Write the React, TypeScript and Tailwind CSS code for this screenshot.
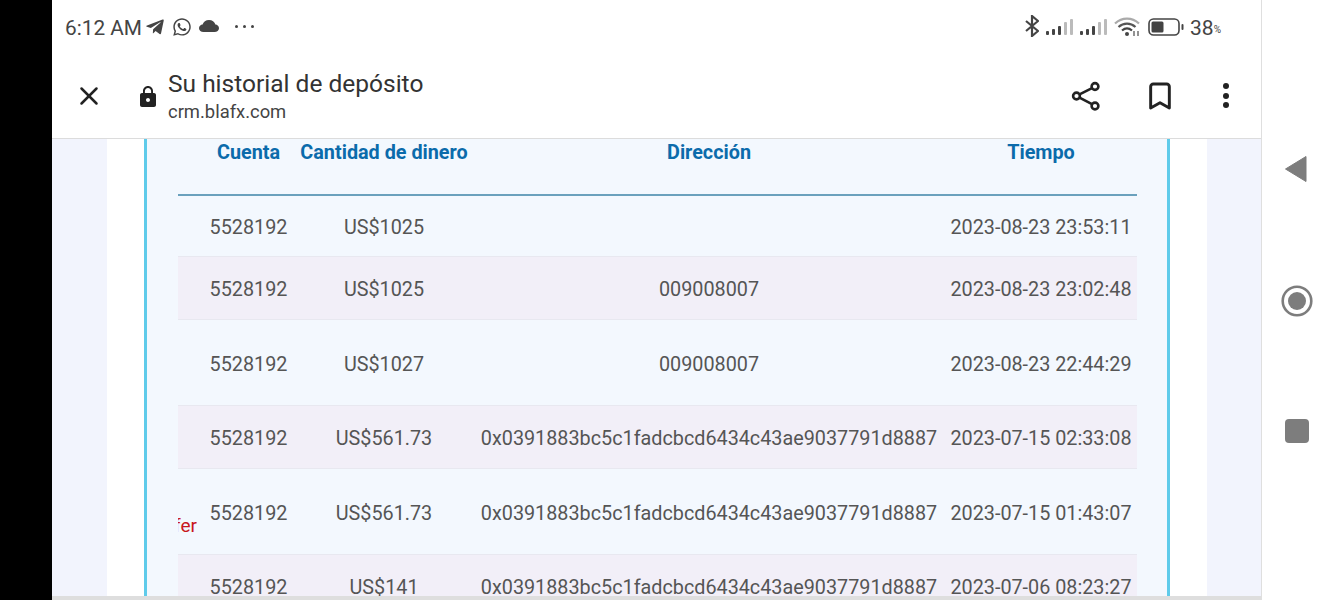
import React from 'react';
import { Bookmark, X } from 'lucide-react';
import { FaTelegramPlane, FaWhatsapp } from 'react-icons/fa';
import { MdLock } from 'react-icons/md';

const addr = '0x0391883bc5c1fadcbcd6434c43ae9037791d8887';

const rows = [
  { amount: 'US$1025', dir: '', time: '2023-08-23 23:53:11', h: 'h-[61px]', shaded: false, note: '' },
  { amount: 'US$1025', dir: '009008007', time: '2023-08-23 23:02:48', h: 'h-[63px]', shaded: true, note: '' },
  { amount: 'US$1027', dir: '009008007', time: '2023-08-23 22:44:29', h: 'h-[86px]', shaded: false, note: '' },
  { amount: 'US$561.73', dir: addr, time: '2023-07-15 02:33:08', h: 'h-[63px]', shaded: true, note: '' },
  { amount: 'US$561.73', dir: addr, time: '2023-07-15 01:43:07', h: 'h-[86px]', shaded: false, note: 'Transfer' },
  { amount: 'US$141', dir: addr, time: '2023-07-06 08:23:27', h: 'h-[63px]', shaded: true, note: '' },
];

const Signal = () => (
  <svg width="28" height="18" viewBox="0 0 28 18" className="shrink-0">
    <rect x="0" y="13" width="3" height="4" rx="1" fill="#444" />
    <rect x="6" y="11" width="3" height="6" rx="1" fill="#444" />
    <rect x="12" y="8" width="3" height="9" rx="1" fill="#444" />
    <rect x="18" y="4" width="3" height="13" rx="1" fill="#bbb" />
    <rect x="24" y="1" width="3" height="16" rx="1" fill="#bbb" />
  </svg>
);

const App: React.FC = () => {
  return (
    <div className="flex h-[600px] w-[1333px] overflow-hidden bg-white font-['Roboto',sans-serif]">
      <div className="w-[52px] shrink-0 bg-black" />

      <div className="flex w-[1209px] shrink-0 flex-col">
        {/* status bar */}
        <div className="flex h-[54px] shrink-0 items-center justify-between pl-[13px] pr-[40px] text-[#444]">
          <div className="flex items-center">
            <span className="text-[20.8px] leading-[28px] mt-[1px]">6:12 AM</span>
            <FaTelegramPlane className="ml-[3px] h-[20px] w-[20px]" />
            <FaWhatsapp className="ml-[7px] h-[20px] w-[20px]" />
            <svg width="20" height="12" viewBox="0 0 20 12" className="ml-[7px] mb-[3px]">
              <path d="M4.5 12C2 12 0 10.4 0 8.2 0 6.2 1.6 4.8 3.6 4.6 4.4 2 6.8 0 10 0c3.2 0 5.6 2 6.4 4.6 2 .2 3.6 1.6 3.6 3.6 0 2.2-2 3.8-4.5 3.8Z" fill="#444" />
            </svg>
            <span className="ml-[16px] mb-[2px] flex gap-[5px]">
              <i className="h-[3px] w-[3px] rounded-full bg-[#444]" />
              <i className="h-[3px] w-[3px] rounded-full bg-[#444]" />
              <i className="h-[3px] w-[3px] rounded-full bg-[#444]" />
            </span>
          </div>
          <div className="flex items-center">
            <svg width="14" height="22" viewBox="0 0 14 22" fill="none" stroke="#444" strokeWidth="2.2" className="mb-[2px]">
              <path d="M1 6L13 16 7 21V1L13 6 1 16" />
            </svg>
            <span className="ml-[7px]"><Signal /></span>
            <span className="ml-[6px]"><Signal /></span>
            <svg width="26" height="20" viewBox="0 0 26 20" fill="none" className="ml-[6px]">
              <path d="M1 6.5C8 0 18 0 25 6.5" stroke="#aaa" strokeWidth="2.2" />
              <path d="M4.5 10C9.5 5.5 16.5 5.5 21.5 10" stroke="#555" strokeWidth="2.2" />
              <path d="M8 13.5C11 11 15 11 18 13.5" stroke="#444" strokeWidth="2.2" />
              <circle cx="13" cy="17" r="2" fill="#444" />
              <path d="M20 14V19M24 14V19" stroke="#666" strokeWidth="1.4" />
            </svg>
            <svg width="36" height="18" viewBox="0 0 36 18" fill="none" className="ml-[8px]">
              <rect x="1" y="1" width="30" height="16" rx="4.5" stroke="#444" strokeWidth="1.6" />
              <rect x="3.5" y="3.5" width="12" height="11" rx="1.5" fill="#444" />
              <rect x="33.5" y="6" width="2" height="6" rx="1" fill="#444" />
            </svg>
            <span className="ml-[6px] text-[21px] leading-[28px] mt-[1px]">38</span>
            <span className="mt-[5px] text-[10px]">%</span>
          </div>
        </div>

        {/* browser header */}
        <div className="flex h-[85px] shrink-0 items-center border-b border-[#dcdcdc] pl-[22px] pr-[28px]">
          <X className="h-[30px] w-[30px] text-[#222]" strokeWidth={2} />
          <MdLock className="ml-[32px] mt-[1px] h-[24px] w-[24px] text-[#222]" />
          <div className="ml-[8px] flex-1">
            <div className="text-[24.5px] leading-[30px] text-[#333]">Su historial de depósito</div>
            <div className="text-[18.4px] leading-[25px] text-[#444]">crm.blafx.com</div>
          </div>
          <svg width="32" height="32" viewBox="0 0 32 32" fill="none" stroke="#222" strokeWidth="2.6" className="-mt-[1px]">
            <circle cx="25" cy="6.5" r="3.4" />
            <circle cx="6.5" cy="16" r="3.4" />
            <circle cx="25" cy="26" r="3.4" />
            <path d="M9.5 14.4L22 8.2M9.5 17.6L22 24.2" />
          </svg>
          <Bookmark className="-mt-[1px] ml-[42px] h-[32px] w-[32px] text-[#222]" strokeWidth={2.2} />
          <span className="-mt-[1px] ml-[47px] mr-[2px] flex w-[8px] flex-col gap-[3.5px]">
            <i className="h-[6px] w-[6px] rounded-full bg-[#222]" />
            <i className="h-[6px] w-[6px] rounded-full bg-[#222]" />
            <i className="h-[6px] w-[6px] rounded-full bg-[#222]" />
          </span>
        </div>

        {/* page */}
        <div className="flex min-h-0 flex-1 overflow-hidden border-b-[4px] border-[#dedede] bg-[#f2f4fd]">
          <div className="ml-[55px] flex w-[1100px] bg-white px-[37px]">
            <div className="flex w-full overflow-hidden border-x-[3px] border-[#5fcbea] bg-[#f3f8fe] pl-[31px] pr-[30px]">
              <div className="w-full text-[19.8px] text-[#555]">
                <div className="grid h-[57px] grid-cols-[19px_103px_168px_482px_182px] border-b-2 border-[#6aa1bd] pt-[2px] text-center text-[19.8px] font-bold leading-[24px] text-[#0b6bab]">
                  <span />
                  <span>Cuenta</span>
                  <span className="whitespace-nowrap">Cantidad de dinero</span>
                  <span>Dirección</span>
                  <span>Tiempo</span>
                </div>
                {rows.map((row, i) => (
                  <div
                    key={i}
                    className={`grid ${row.h} grid-cols-[19px_103px_168px_482px_182px] items-center border-b border-[#e8e8f0] pt-[4px] text-center ${row.shaded ? 'bg-[#f2eff8]' : ''}`}
                  >
                    <span className="mt-[26px] flex justify-end overflow-hidden whitespace-nowrap text-[19px] text-[#c8161d]">
                      {row.note}
                    </span>
                    <span>5528192</span>
                    <span>{row.amount}</span>
                    <span className="whitespace-nowrap">{row.dir}</span>
                    <span className="whitespace-nowrap">{row.time}</span>
                  </div>
                ))}
              </div>
            </div>
          </div>
        </div>
      </div>

      {/* android nav */}
      <div className="flex flex-1 flex-col items-center border-l border-[#dfdfdf] pr-[2px] pt-[155px]">
        <svg width="24" height="28" viewBox="0 0 24 28" className="mr-[2px]">
          <path d="M22 1.5V26.5L1.5 14Z" fill="#7d7d7d" stroke="#7d7d7d" strokeLinejoin="round" />
        </svg>
        <svg width="32" height="32" viewBox="0 0 32 32" className="mt-[102px]">
          <circle cx="16" cy="16" r="14.3" fill="none" stroke="#7d7d7d" strokeWidth="2.6" />
          <circle cx="16" cy="16" r="9" fill="#7d7d7d" />
        </svg>
        <div className="mt-[102px] h-[24px] w-[24px] rounded-[4px] bg-[#7d7d7d]" />
      </div>
    </div>
  );
};

export default App;
